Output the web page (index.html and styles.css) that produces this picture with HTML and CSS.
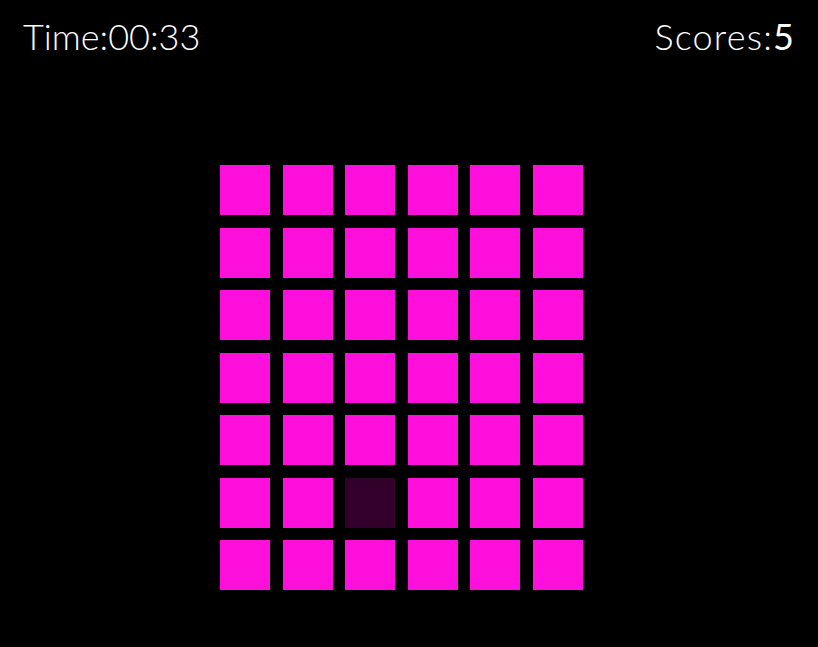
FILE: index.html
```html
<!DOCTYPE html>
<html>
<head>
<meta charset="utf-8">
<link rel="stylesheet" href="styles.css">
</head>
<body>
<div class="game">
  <header class="hud">
    <div class="time">Time:<span>00:33</span></div>
    <div class="scores">Scores:<span class="num">5</span></div>
  </header>
  <div class="board">
    <div class="cell"></div><div class="cell"></div><div class="cell"></div><div class="cell"></div><div class="cell"></div><div class="cell"></div>
    <div class="cell"></div><div class="cell"></div><div class="cell"></div><div class="cell"></div><div class="cell"></div><div class="cell"></div>
    <div class="cell"></div><div class="cell"></div><div class="cell"></div><div class="cell"></div><div class="cell"></div><div class="cell"></div>
    <div class="cell"></div><div class="cell"></div><div class="cell"></div><div class="cell"></div><div class="cell"></div><div class="cell"></div>
    <div class="cell"></div><div class="cell"></div><div class="cell"></div><div class="cell"></div><div class="cell"></div><div class="cell"></div>
    <div class="cell"></div><div class="cell"></div><div class="cell dim"></div><div class="cell"></div><div class="cell"></div><div class="cell"></div>
    <div class="cell"></div><div class="cell"></div><div class="cell"></div><div class="cell"></div><div class="cell"></div><div class="cell"></div>
  </div>
</div>
</body>
</html>
```
FILE: styles.css
```css
html, body {
  margin: 0;
  padding: 0;
  background: #000;
  height: 100%;
}
.game {
  width: 818px;
  height: 647px;
  font-family: Lato, "Open Sans", sans-serif;
  color: #fff;
}
.hud {
  display: flex;
  justify-content: space-between;
  align-items: baseline;
  padding: 14px 24px 0 23px;
  font-size: 36px;
  font-weight: 300;
  line-height: 44px;
}
.scores {
  letter-spacing: 1.2px;
}
.scores .num {
  font-weight: 400;
  letter-spacing: 0;
}
.board {
  display: grid;
  grid-template-columns: repeat(6, 50px);
  grid-auto-rows: 50px;
  gap: 12.5px;
  margin: 107px 0 0 220px;
  width: max-content;
}
.cell {
  background: #ff0fdc;
}
.cell.dim {
  background: #33002c;
}
```
